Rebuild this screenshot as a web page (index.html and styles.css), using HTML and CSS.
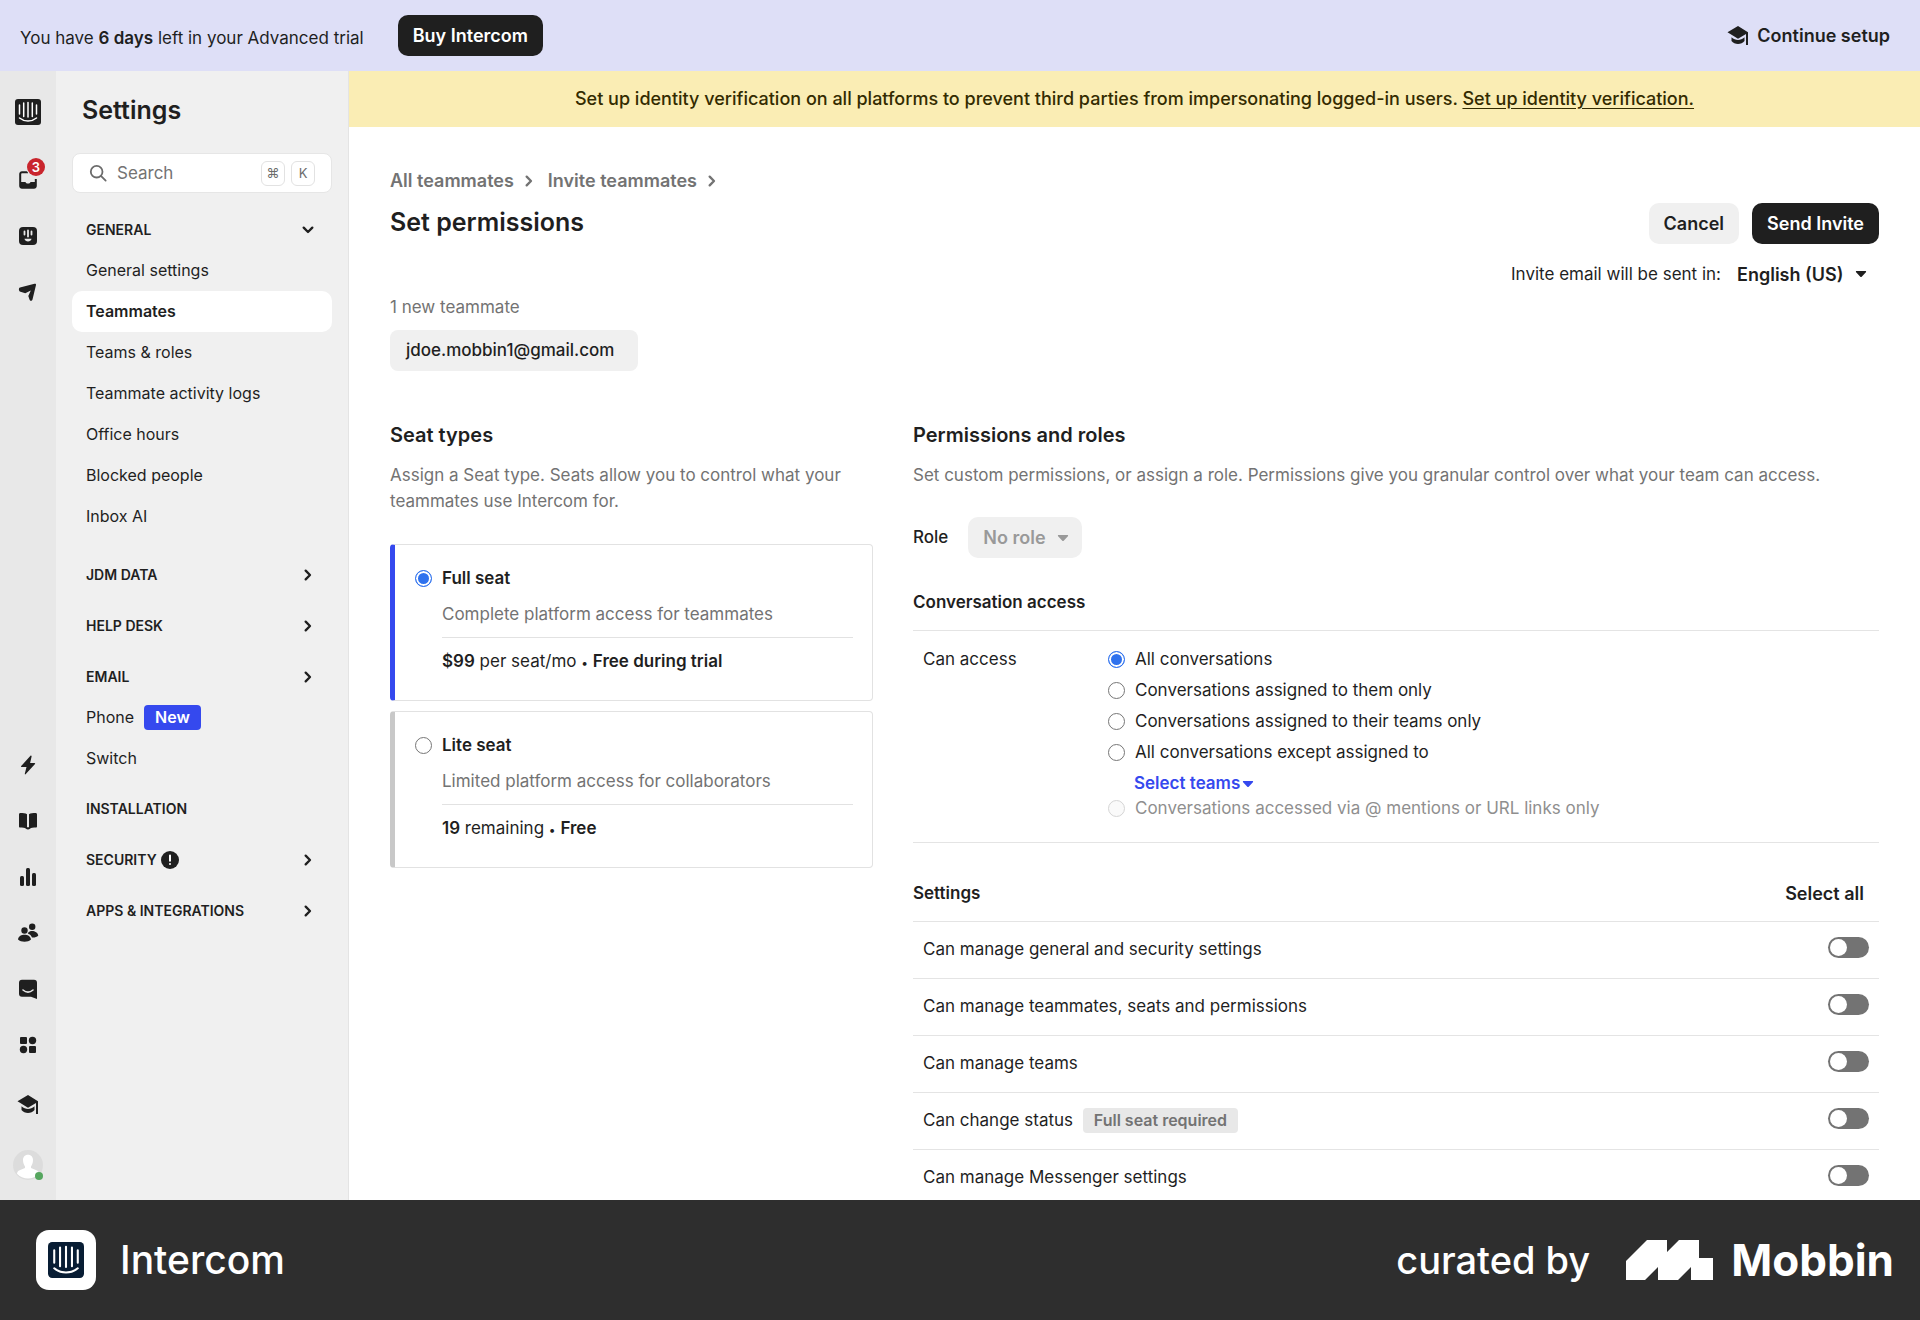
FILE: index.html
```html
<!DOCTYPE html>
<html lang="en">

<head>
    <meta charset="utf-8">
    <title>Set permissions</title>
    <link rel="stylesheet" href="styles.css">
</head>

<body>
    <!-- Shared icons -->
    <svg class="sprite" aria-hidden="true">
        <symbol id="chevron" viewBox="0 0 12 12">
            <path d="M4 2.300 7.700 6 4 9.700" fill="none" stroke="currentColor" stroke-width="2" stroke-linecap="round" stroke-linejoin="round" />
        </symbol>
        <symbol id="caret" viewBox="0 0 12 8">
            <path d="M1.600 1h8.800c.7 0 1 .7.5 1.200L6.700 6.700a1 1 0 0 1-1.400 0L1.100 2.200C.6 1.700.9 1 1.600 1z" fill="currentColor" />
        </symbol>
        <symbol id="cap" viewBox="0 0 22 20">
            <path d="M11 0 .5 6.300 11 12.800 19 8v11h2V6.300z" fill="currentColor" />
            <path d="M4.500 11.200c4 3.600 9 3.600 13 0v3.800c-3 4-10 4-13 0z" fill="currentColor" />
        </symbol>
        <symbol id="intercom" viewBox="0 0 26 26">
            <rect width="26" height="26" rx="3" fill="currentColor" />
            <path d="M4.500 6v9M8.700 4v13.500M13 3.500V18M17.300 4v13.500M21.500 6v9M4.500 19c5 4 12 4 17 0" fill="none" stroke="#fff" stroke-width="1.500" stroke-linecap="round" />
        </symbol>
    </svg>

    <!-- Trial bar -->
    <header class="trial-bar">
        <p>You have <b>6 days</b> left in your Advanced trial</p>
        <button class="btn btn-dark">Buy Intercom</button>
        <button class="setup"><svg width="22" height="20"><use href="#cap" /></svg>Continue setup</button>
    </header>

    <div class="app">
        <!-- Icon rail -->
        <nav class="rail" aria-label="Main">
            <a class="rail-logo" href="#" aria-label="Home"><svg width="26" height="26"><use href="#intercom" /></svg></a>
            <a href="#" aria-label="Inbox">
                <svg width="20" height="20" viewBox="0 0 20 20"><path d="M10 2.200H4A1.800 1.800 0 0 0 2.200 4v12A1.800 1.800 0 0 0 4 17.800h12a1.800 1.800 0 0 0 1.800-1.800V9" fill="none" stroke="#1f1f1f" stroke-width="2" /><path d="M2 12h5.500c.5 2 4.500 2 5 0H18v4a2 2 0 0 1-2 2H4a2 2 0 0 1-2-2z" fill="#1f1f1f" /></svg>
                <span class="count">3</span>
            </a>
            <a href="#" aria-label="Fin">
                <svg width="20" height="20" viewBox="0 0 20 20"><rect x="1" y="1" width="18" height="18" rx="4" fill="#1f1f1f" /><path d="M6.500 5.500v3M10 4.500v6M13.500 5.500v3" stroke="#e8e8e8" stroke-width="1.800" stroke-linecap="round" /><path d="M6.500 12.800h7c-.5 3.600-6.500 3.600-7 0z" fill="#e8e8e8" /></svg>
            </a>
            <a href="#" aria-label="Outbound">
                <svg width="20" height="20" viewBox="0 0 20 20"><path d="M2 5.500 16.500 1.800c1.200-.3 1.700.3 1.500 1.300L14.500 17.500c-.4 1.600-2.200 1.700-2.800.4L10.300 14l2.500-5.500-5.500 2.800-4.800-1.500C.6 9.200.4 6 2 5.500z" fill="#1f1f1f" /></svg>
            </a>
            <a class="rail-bottom" href="#" aria-label="Automation">
                <svg width="20" height="20" viewBox="0 0 20 20"><path d="M12.500.8 3.200 11c-.4.5-.1 1 .5 1h4.800l-1.700 6.700c-.2.8.5 1 1 .4L17 9c.4-.5.1-1-.5-1h-4.400l1.500-6.500c.1-.8-.6-1.200-1.100-.7z" fill="#1f1f1f" /></svg>
            </a>
            <a href="#" aria-label="Articles">
                <svg width="20" height="20" viewBox="0 0 20 20"><path d="M1 3.500C1 2.500 1.600 2 2.500 2 5 2 7.500 2.200 9 3.200V16c.6.500 1.400.500 2 0V3.200C12.500 2.200 15 2 17.500 2c.9 0 1.500.5 1.500 1.500v12c0 .7-.5 1-1 1-2.500 0-5 .2-6 1.200-.8 1-3.200 1-4 0-1-1-3.500-1.200-6-1.200-.5 0-1-.3-1-1z" fill="#1f1f1f" /></svg>
            </a>
            <a href="#" aria-label="Reports">
                <svg width="20" height="20" viewBox="0 0 20 20" fill="#1f1f1f"><rect x="2" y="9" width="4" height="10" rx="1.500" /><rect x="8" y="1" width="4" height="18" rx="1.500" /><rect x="14" y="6" width="4" height="13" rx="1.500" /></svg>
            </a>
            <a href="#" aria-label="Contacts">
                <svg width="22" height="20" viewBox="0 0 22 20"><circle cx="7.500" cy="7.500" r="3.200" fill="#1f1f1f" /><circle cx="15.200" cy="3.800" r="3.200" fill="#1f1f1f" /><path d="M1 16.500c.5-3.500 3.500-4.800 6.500-4.800s6 1.300 6.500 4.800c-3 3-10 3-13 0zM11.500 9.300c3-2.500 9-1 9.800 3.200-1.500 1.700-4 2.200-6.300 2-.8-2-2-3.200-4.200-4z" fill="#1f1f1f" /></svg>
            </a>
            <a href="#" aria-label="Messenger">
                <svg width="20" height="20" viewBox="0 0 20 20"><path d="M4 .800h12a3 3 0 0 1 3 3V20l-6-2.300H4a3 3 0 0 1-3-3V3.800a3 3 0 0 1 3-3z" fill="#1f1f1f" /><path d="M5 11c3 2.500 7 2.500 10 0" fill="none" stroke="#e8e8e8" stroke-width="1.600" stroke-linecap="round" /></svg>
            </a>
            <a href="#" aria-label="Apps">
                <svg width="20" height="20" viewBox="0 0 20 20" fill="#1f1f1f"><rect x="2" y="2" width="7" height="7" rx="1" /><circle cx="14.500" cy="5.500" r="3.700" /><circle cx="5.500" cy="14.500" r="3.700" /><rect x="11" y="11" width="7" height="7" rx="1" /></svg>
            </a>
            <a class="rail-tall" href="#" aria-label="Academy"><svg width="22" height="20"><use href="#cap" /></svg></a>
            <a class="rail-tall" href="#" aria-label="Profile">
                <svg width="32" height="32" viewBox="0 0 32 32"><circle cx="16" cy="16" r="15" fill="#dcdcdc" /><path d="M11 11c0-7 10-7 10 0 0 3-1 5-2 6.500v1.500l6 2.500c1 .5 2 2 2 3.200a15 15 0 0 1-22 0c0-1.200 1-2.700 2-3.200l6-2.500v-1.500c-1-1.500-2-3.500-2-6.500z" fill="#fff" /><circle cx="27" cy="27" r="4" fill="#56a65f" /></svg>
            </a>
        </nav>

        <!-- Settings menu -->
        <aside class="sidebar">
            <h2>Settings</h2>
            <div class="search">
                <svg width="18" height="18" viewBox="0 0 20 20"><circle cx="8.500" cy="8.500" r="6.500" fill="none" stroke="#6b6b6b" stroke-width="2" /><path d="m13.500 13.500 5 5" stroke="#6b6b6b" stroke-width="2" stroke-linecap="round" /></svg>
                <input type="text" placeholder="Search" aria-label="Search">
                <kbd>⌘</kbd>
                <kbd>K</kbd>
            </div>
            <button class="group">GENERAL <svg class="open" width="14" height="14"><use href="#chevron" /></svg></button>
            <ul>
                <li><a href="#">General settings</a></li>
                <li><a class="active" href="#">Teammates</a></li>
                <li><a href="#">Teams &amp; roles</a></li>
                <li><a href="#">Teammate activity logs</a></li>
                <li><a href="#">Office hours</a></li>
                <li><a href="#">Blocked people</a></li>
                <li><a href="#">Inbox AI</a></li>
            </ul>
            <button class="group">JDM DATA <svg width="14" height="14"><use href="#chevron" /></svg></button>
            <button class="group">HELP DESK <svg width="14" height="14"><use href="#chevron" /></svg></button>
            <button class="group">EMAIL <svg width="14" height="14"><use href="#chevron" /></svg></button>
            <ul>
                <li><a href="#">Phone <span class="new">New</span></a></li>
                <li><a href="#">Switch</a></li>
            </ul>
            <button class="group">INSTALLATION</button>
            <button class="group">
                <span class="alert">SECURITY <svg width="18" height="18" viewBox="0 0 18 18"><circle cx="9" cy="9" r="9" fill="#1f1f1f" /><path d="M9 4.500v5.200M9 12.900v.2" stroke="#fff" stroke-width="2" stroke-linecap="round" /></svg></span>
                <svg width="14" height="14"><use href="#chevron" /></svg>
            </button>
            <button class="group">APPS &amp; INTEGRATIONS <svg width="14" height="14"><use href="#chevron" /></svg></button>
        </aside>

        <!-- Page -->
        <main>
            <div class="notice">Set up identity verification on all platforms to prevent third parties from impersonating logged-in users. <a href="#">Set up identity verification.</a></div>

            <div class="page">
                <nav class="breadcrumb" aria-label="Breadcrumb">
                    <a href="#">All teammates</a><svg width="14" height="14"><use href="#chevron" /></svg>
                    <a href="#">Invite teammates</a><svg width="14" height="14"><use href="#chevron" /></svg>
                </nav>
                <div class="title-row">
                    <h1>Set permissions</h1>
                    <div class="actions">
                        <button class="btn">Cancel</button>
                        <button class="btn btn-dark">Send Invite</button>
                    </div>
                </div>
                <div class="language">
                    <label for="language">Invite email will be sent in:</label>
                    <span class="select">
                        <select id="language"><option>English (US)</option></select>
                        <svg width="12" height="8"><use href="#caret" /></svg>
                    </span>
                </div>
                <p class="muted">1 new teammate</p>
                <span class="email">jdoe.mobbin1@gmail.com</span>

                <div class="columns">
                    <section>
                        <h3>Seat types</h3>
                        <p class="muted intro">Assign a Seat type. Seats allow you to control what your teammates use Intercom for.</p>
                        <div class="seat selected">
                            <input type="radio" name="seat" id="full-seat" checked>
                            <div class="seat-info">
                                <label for="full-seat">Full seat</label>
                                <p class="muted">Complete platform access for teammates</p>
                                <p class="price"><b>$99</b> per seat/mo <span class="dot">•</span> <b>Free during trial</b></p>
                            </div>
                        </div>
                        <div class="seat">
                            <input type="radio" name="seat" id="lite-seat">
                            <div class="seat-info">
                                <label for="lite-seat">Lite seat</label>
                                <p class="muted">Limited platform access for collaborators</p>
                                <p class="price"><b>19</b> remaining <span class="dot">•</span> <b>Free</b></p>
                            </div>
                        </div>
                    </section>

                    <section>
                        <h3>Permissions and roles</h3>
                        <p class="muted intro">Set custom permissions, or assign a role. Permissions give you granular control over what your team can access.</p>
                        <div class="role">
                            <label for="role">Role</label>
                            <span class="select disabled">
                                <select id="role" disabled><option>No role</option></select>
                                <svg width="12" height="8"><use href="#caret" /></svg>
                            </span>
                        </div>

                        <h4>Conversation access</h4>
                        <div class="access">
                            <span id="can-access">Can access</span>
                            <div class="options" role="radiogroup" aria-labelledby="can-access">
                                <label><input type="radio" name="access" checked>All conversations</label>
                                <label><input type="radio" name="access">Conversations assigned to them only</label>
                                <label><input type="radio" name="access">Conversations assigned to their teams only</label>
                                <label><input type="radio" name="access">All conversations except assigned to</label>
                                <button class="teams">Select teams<svg width="12" height="8"><use href="#caret" /></svg></button>
                                <label class="off"><input type="radio" name="access" disabled>Conversations accessed via @ mentions or URL links only</label>
                            </div>
                        </div>

                        <div class="list-head">
                            <h4>Settings</h4>
                            <button class="select-all">Select all</button>
                        </div>
                        <div class="permission">
                            <label for="p-general">Can manage general and security settings</label>
                            <input class="toggle" type="checkbox" id="p-general">
                        </div>
                        <div class="permission">
                            <label for="p-teammates">Can manage teammates, seats and permissions</label>
                            <input class="toggle" type="checkbox" id="p-teammates">
                        </div>
                        <div class="permission">
                            <label for="p-teams">Can manage teams</label>
                            <input class="toggle" type="checkbox" id="p-teams">
                        </div>
                        <div class="permission">
                            <label for="p-status">Can change status <span class="required">Full seat required</span></label>
                            <input class="toggle" type="checkbox" id="p-status">
                        </div>
                        <div class="permission">
                            <label for="p-messenger">Can manage Messenger settings</label>
                            <input class="toggle" type="checkbox" id="p-messenger">
                        </div>
                    </section>
                </div>
            </div>
        </main>
    </div>

    <footer class="credit">
        <span class="tile"><svg width="36" height="36"><use href="#intercom" /></svg></span>
        <span class="app-name">Intercom</span>
        <span class="curated">curated by</span>
        <svg class="mark" width="87" height="40" viewBox="0 0 87 40"><path d="M0 21 21 0h20v12L53 0h20v18h14v22H65V27L52 40H32V27L19 40H0z" fill="#fff" /></svg>
        <span class="mobbin">Mobbin</span>
    </footer>
</body>

</html>
```

FILE: styles.css
```css
* {
    box-sizing: border-box;
}

body {
    margin: 0;
    height: 100vh;
    display: flex;
    flex-direction: column;
    overflow: hidden;
    font-family: Inter, "Liberation Sans", sans-serif;
    font-size: 17px;
    line-height: 25px;
    color: #1f1f1f;
    background-color: #fff;
}

h1, h2, h3, h4, p, ul {
    margin: 0;
    padding: 0;
    font-weight: 600;
}

p {
    font-weight: 400;
}

b {
    font-weight: 600;
}

a {
    color: inherit;
    text-decoration: none;
}

button, input, select {
    font: inherit;
    color: inherit;
}

button {
    border: none;
    background: none;
    padding: 0;
    cursor: pointer;
}

svg {
    flex: none;
}

.sprite {
    display: none;
}

.muted {
    color: #737373;
}

.btn {
    height: 41px;
    padding: 0 15px;
    border-radius: 10px;
    background-color: #f0f0f0;
    font-size: 18px;
    font-weight: 600;
}

.btn-dark {
    background-color: #1f1f1f;
    color: #fff;
}

/* Trial bar */
.trial-bar {
    flex: none;
    display: flex;
    align-items: center;
    gap: 34px;
    height: 71px;
    padding: 0 30px 0 20px;
    background-color: #dedff7;
}

.trial-bar p {
    padding-top: 5px;
}

.setup {
    display: flex;
    align-items: center;
    gap: 8px;
    margin-left: auto;
    font-size: 18px;
    font-weight: 600;
}

.app {
    flex: 1;
    display: flex;
    min-height: 0;
}

/* Icon rail */
.rail {
    flex: none;
    display: flex;
    flex-direction: column;
    width: 56px;
    padding-bottom: 5px;
    background-color: #e8e8e8;
}

.rail a {
    position: relative;
    flex: none;
    display: flex;
    align-items: center;
    justify-content: center;
    height: 56px;
}

.rail .rail-logo {
    height: 81px;
}

.rail .rail-bottom {
    margin-top: auto;
}

.rail .rail-tall {
    height: 60px;
}

.rail a:not(.rail-tall) + .rail-tall {
    margin-top: 2px;
}

.count {
    position: absolute;
    top: 6px;
    right: 11px;
    width: 18px;
    height: 18px;
    border-radius: 50%;
    box-shadow: 0 0 0 1px #e8e8e8;
    background-color: #c9252d;
    color: #fff;
    font-size: 13px;
    font-weight: 600;
    line-height: 18px;
    text-align: center;
}

/* Settings menu */
.sidebar {
    flex: none;
    width: 293px;
    padding: 20px 16px;
    border-right: 1px solid #e4e4e4;
    background-color: #f0f0f0;
}

.sidebar h2 {
    padding: 0 10px;
    font-size: 25px;
    line-height: 38px;
}

.search {
    display: flex;
    align-items: center;
    gap: 6px;
    height: 40px;
    margin: 24px 0 16px;
    padding: 0 16px;
    border: 1px solid #e6e6e6;
    border-radius: 8px;
    background-color: #fff;
}

.search input {
    flex: 1;
    min-width: 0;
    padding: 0 4px;
    border: none;
    outline: none;
    background: none;
}

.search input::placeholder {
    color: #737373;
    opacity: 1;
}

kbd {
    width: 24px;
    height: 25px;
    border: 1px solid #e2e2e2;
    border-radius: 6px;
    color: #6b6b6b;
    font-family: Inter, "DejaVu Sans", sans-serif;
    font-size: 13px;
    line-height: 23px;
    text-align: center;
}

.group {
    display: flex;
    align-items: center;
    justify-content: space-between;
    width: 100%;
    height: 41px;
    margin-bottom: 10px;
    padding: 0 17px 0 14px;
    font-size: 14px;
    font-weight: 600;
}

.group:has(+ ul) {
    margin-bottom: 0;
}

.group .open {
    transform: rotate(90deg);
}

.alert {
    display: flex;
    align-items: center;
    gap: 4px;
}

.sidebar ul {
    margin-bottom: 17px;
    list-style: none;
    font-size: 16px;
    font-weight: 400;
}

.sidebar ul ~ ul {
    margin-bottom: 9px;
}

.sidebar li a {
    display: flex;
    align-items: center;
    gap: 10px;
    height: 41px;
    padding: 0 14px;
    border-radius: 10px;
}

.sidebar li .active {
    background-color: #fff;
    font-weight: 600;
}

.new {
    padding: 0 11px;
    border-radius: 4px;
    background-color: #3549ee;
    color: #fff;
    font-weight: 600;
}

/* Page */
main {
    flex: 1;
    min-width: 0;
    overflow: hidden;
}

.notice {
    padding: 15px 20px;
    background-color: #faedb4;
    color: #332b00;
    font-size: 18px;
    font-weight: 500;
    line-height: 26px;
    text-align: center;
}

.notice a {
    text-decoration: underline;
    text-underline-offset: 3px;
}

.page {
    padding: 41px 41px 0;
}

.breadcrumb {
    display: flex;
    align-items: center;
    gap: 8px;
    color: #737373;
    font-size: 18px;
    font-weight: 600;
}

.breadcrumb svg {
    margin-right: 4px;
}

.title-row {
    display: flex;
    align-items: flex-end;
    justify-content: space-between;
    height: 51px;
}

h1 {
    font-size: 25px;
    line-height: 44px;
}

.actions {
    display: flex;
    gap: 13px;
}

.language {
    display: flex;
    justify-content: flex-end;
    align-items: center;
    gap: 16px;
    height: 51px;
    padding: 9px 12px 0 0;
}

.select {
    display: flex;
    align-items: center;
    gap: 11px;
    font-size: 18px;
    font-weight: 600;
}

.select select {
    appearance: none;
    padding: 0;
    border: none;
    background: none;
    opacity: 1;
}

.select.disabled {
    height: 41px;
    padding: 0 13px 0 15px;
    border-radius: 10px;
    background-color: #f0f0f0;
    color: #999;
}

.email {
    display: inline-block;
    margin-top: 10px;
    padding: 8px 24px 8px 16px;
    border-radius: 8px;
    background-color: #f0f0f0;
    font-weight: 500;
}

.columns {
    display: grid;
    grid-template-columns: 1fr 2fr;
    gap: 40px;
    margin-top: 52px;
}

h3 {
    margin-bottom: 14px;
    font-size: 20px;
}

.intro {
    line-height: 26px;
}

input[type="radio"] {
    appearance: none;
    flex: none;
    width: 17px;
    height: 17px;
    margin: 0;
    border: 1px solid #767676;
    border-radius: 50%;
    background-color: #fff;
}

input[type="radio"]:checked {
    border: 1px solid #2f72ee;
    background-color: #2f72ee;
    box-shadow: inset 0 0 0 2px #fff;
}

input[type="radio"]:disabled {
    border-color: #d5d5d5;
    background-color: #fafafa;
}

.seat {
    display: flex;
    gap: 10px;
    margin-top: 10px;
    padding: 21px 19px 25px 20px;
    border: 1px solid #e2e2e2;
    border-left: 5px solid #c8c8c8;
    border-radius: 4px;
}

.intro + .seat {
    margin-top: 30px;
}

.seat.selected {
    border-left-color: #3549ee;
}

.seat input {
    margin-top: 4px;
}

.seat-info {
    flex: 1;
}

.seat-info label {
    display: block;
    margin-bottom: 11px;
    font-weight: 600;
}

.price {
    margin-top: 10px;
    padding-top: 11px;
    border-top: 1px solid #e2e2e2;
}

.dot {
    font-size: 12px;
}

.role {
    display: flex;
    align-items: center;
    gap: 20px;
    margin: 29px 0 32px;
    font-weight: 500;
}

h4 {
    font-size: 17px;
    padding-bottom: 15px;
}

.access {
    display: grid;
    grid-template-columns: 185px 1fr;
    padding: 16px 10px 21px;
    border: solid #e4e4e4;
    border-width: 1px 0;
}

.options {
    display: flex;
    flex-direction: column;
    align-items: flex-start;
}

.options label {
    display: flex;
    align-items: center;
    gap: 10px;
    margin-bottom: 6px;
}

.options .off {
    margin: 0;
    color: #8f8f8f;
}

.teams {
    display: flex;
    align-items: center;
    gap: 2px;
    margin-left: 26px;
    color: #3549ee;
    font-weight: 600;
}

.list-head {
    display: flex;
    justify-content: space-between;
    padding: 38px 15px 0 0;
}

.select-all {
    padding-bottom: 15px;
    font-size: 18px;
    font-weight: 600;
}

.permission {
    display: flex;
    align-items: flex-start;
    justify-content: space-between;
    padding: 15px 10px 16px;
    border-top: 1px solid #e4e4e4;
}

.required {
    display: inline-block;
    margin-left: 5px;
    padding: 0 11px;
    border-radius: 4px;
    background-color: #e8e8e8;
    color: #737373;
    font-size: 16px;
    font-weight: 600;
}

.toggle {
    appearance: none;
    width: 41px;
    height: 21px;
    margin: 0;
    padding: 2px;
    border-radius: 11px;
    background-color: #737373;
}

.toggle::before {
    content: "";
    display: block;
    width: 17px;
    height: 17px;
    border-radius: 50%;
    background-color: #fff;
}

.toggle:checked::before {
    margin-left: auto;
}

/* Credit strip */
.credit {
    flex: none;
    display: flex;
    align-items: center;
    height: 120px;
    padding: 0 26px 0 36px;
    background-color: #2e2e2e;
    color: #fff;
    line-height: 60px;
}

.tile {
    display: flex;
    align-items: center;
    justify-content: center;
    width: 60px;
    height: 60px;
    border-radius: 13px;
    background-color: #fff;
    color: #081d34;
}

.app-name {
    margin-left: 24px;
    font-size: 39px;
    font-weight: 500;
}

.curated {
    margin-left: auto;
    font-size: 38px;
    font-weight: 500;
}

.mark {
    margin: 0 18px 0 36px;
}

.mobbin {
    font-size: 44px;
    font-weight: 700;
}
```
